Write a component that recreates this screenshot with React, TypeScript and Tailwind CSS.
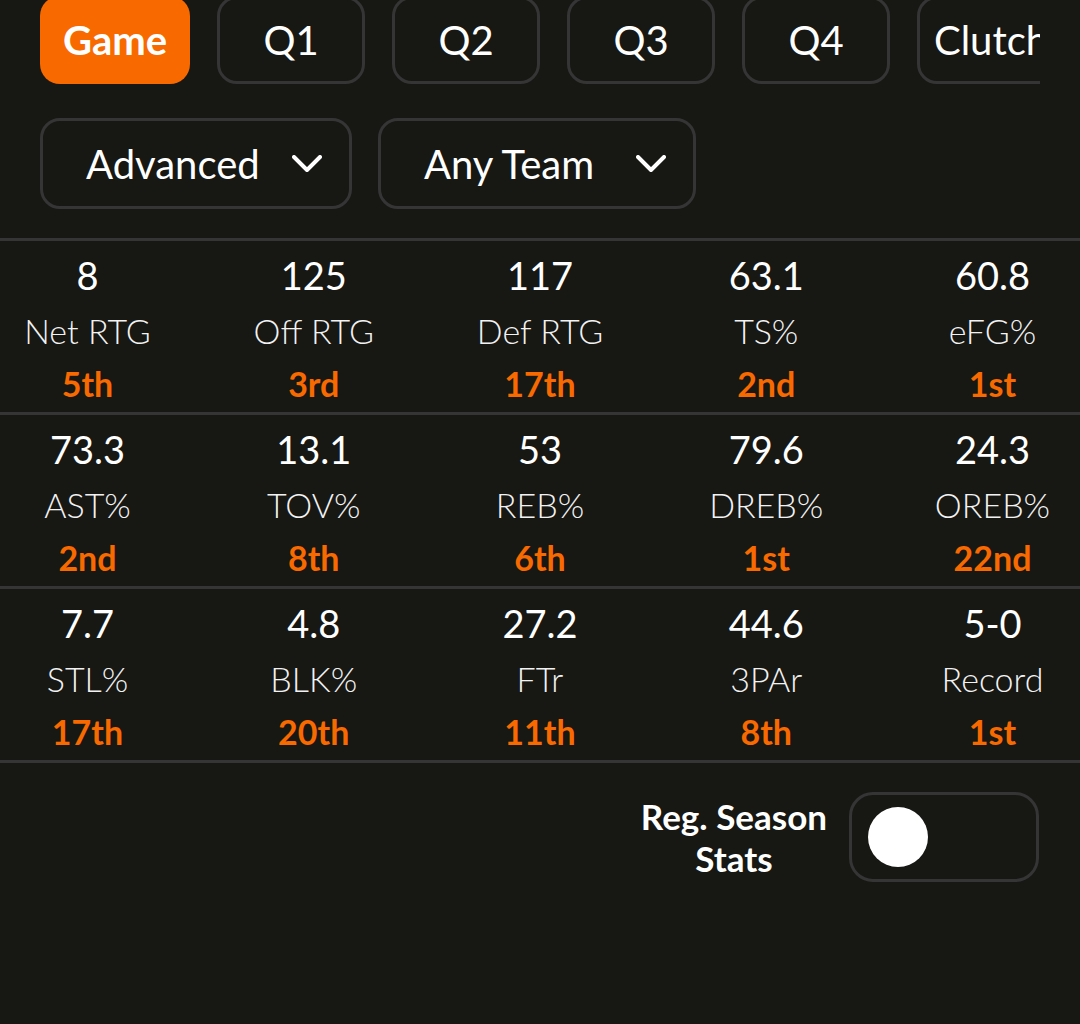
import React from 'react';

const tabs = ['Game', 'Q1', 'Q2', 'Q3', 'Q4', 'Clutch'];

const rows = [
  [
    { value: '8', label: 'Net RTG', rank: '5th' },
    { value: '125', label: 'Off RTG', rank: '3rd' },
    { value: '117', label: 'Def RTG', rank: '17th' },
    { value: '63.1', label: 'TS%', rank: '2nd' },
    { value: '60.8', label: 'eFG%', rank: '1st' },
  ],
  [
    { value: '73.3', label: 'AST%', rank: '2nd' },
    { value: '13.1', label: 'TOV%', rank: '8th' },
    { value: '53', label: 'REB%', rank: '6th' },
    { value: '79.6', label: 'DREB%', rank: '1st' },
    { value: '24.3', label: 'OREB%', rank: '22nd' },
  ],
  [
    { value: '7.7', label: 'STL%', rank: '17th' },
    { value: '4.8', label: 'BLK%', rank: '20th' },
    { value: '27.2', label: 'FTr', rank: '11th' },
    { value: '44.6', label: '3PAr', rank: '8th' },
    { value: '5-0', label: 'Record', rank: '1st' },
  ],
];

const Chevron = () => (
  <svg width="30" height="18" viewBox="0 0 30 18" fill="none">
    <polyline points="2,2 15,15 28,2" stroke="white" strokeWidth="4" strokeLinecap="round" strokeLinejoin="round" />
  </svg>
);

export default function App() {
  return (
    <div className="min-h-[1024px] w-[1080px] bg-[#171713] text-white overflow-hidden" style={{ fontFamily: 'Lato, "Noto Sans", sans-serif' }}>
      {/* Period tabs */}
      <div className="mx-[40px] -mt-[4px] flex gap-[27px] overflow-hidden">
        {tabs.map((t, i) =>
          i === 0 ? (
            <div key={t} className="shrink-0 w-[150px] h-[88px] rounded-[20px] bg-[#f86900] flex items-center justify-center text-[40px] font-bold">
              {t}
            </div>
          ) : (
            <div key={t} className="shrink-0 w-[148px] h-[88px] rounded-[20px] border-[3px] border-[#353535] flex items-center justify-center text-[40px]">
              {t}
            </div>
          )
        )}
      </div>

      {/* Dropdowns */}
      <div className="mx-[40px] mt-[34px] flex gap-[26px]">
        <div className="w-[312px] h-[91px] rounded-[20px] border-[3px] border-[#353535] flex items-center justify-between pl-[43px] pr-[27px] text-[40px]">
          <span>Advanced</span>
          <Chevron />
        </div>
        <div className="w-[318px] h-[91px] rounded-[20px] border-[3px] border-[#353535] flex items-center justify-between pl-[43px] pr-[27px] text-[40px]">
          <span>Any Team</span>
          <Chevron />
        </div>
      </div>

      {/* Stats grid */}
      <div className="mt-[29px] border-b-[3px] border-[#353535]">
        {rows.map((row, ri) => (
          <div key={ri} className="border-t-[3px] border-[#353535] flex justify-between pt-[12px] pb-[6px]">
            {row.map((s) => (
              <div key={s.label} className="w-[175px] flex flex-col items-center">
                <div className="text-[38px] leading-[44px]">{s.value}</div>
                <div className="text-[34px] font-light leading-[44px] mt-[12px] text-[#f2f2f2]">{s.label}</div>
                <div className="text-[34px] font-bold leading-[44px] mt-[9px] text-[#f86900]">{s.rank}</div>
              </div>
            ))}
          </div>
        ))}
      </div>

      {/* Regular season toggle */}
      <div className="mt-[29px] mr-[41px] flex items-center justify-end gap-[22px]">
        <div className="text-center text-[35px] font-bold leading-[42px]">
          Reg. Season
          <br />
          Stats
        </div>
        <div className="w-[190px] h-[90px] rounded-[24px] border-[3px] border-[#353535] flex items-center pl-[16px]">
          <div className="w-[60px] h-[60px] rounded-full bg-white" />
        </div>
      </div>
    </div>
  );
}
